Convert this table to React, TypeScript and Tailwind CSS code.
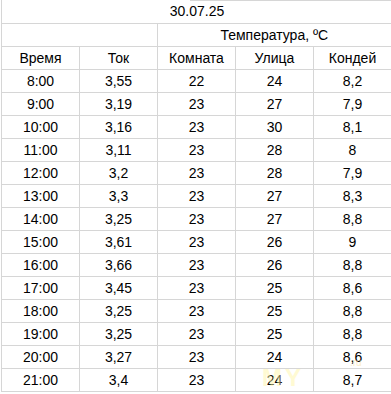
import React from "react";

const rows: string[][] = [
  ["8:00", "3,55", "22", "24", "8,2"],
  ["9:00", "3,19", "23", "27", "7,9"],
  ["10:00", "3,16", "23", "30", "8,1"],
  ["11:00", "3,11", "23", "28", "8"],
  ["12:00", "3,2", "23", "28", "7,9"],
  ["13:00", "3,3", "23", "27", "8,3"],
  ["14:00", "3,25", "23", "27", "8,8"],
  ["15:00", "3,61", "23", "26", "9"],
  ["16:00", "3,66", "23", "26", "8,8"],
  ["17:00", "3,45", "23", "25", "8,6"],
  ["18:00", "3,25", "23", "25", "8,8"],
  ["19:00", "3,25", "23", "25", "8,8"],
  ["20:00", "3,27", "23", "24", "8,6"],
  ["21:00", "3,4", "23", "24", "8,7"],
];

const header = ["Время", "Ток", "Комната", "Улица", "Кондей"];

export default function App() {
  return (
    <div
      className="relative w-[391px] h-[394px] overflow-hidden bg-white text-[14px] text-black"
      style={{ fontFamily: '"Liberation Sans", Arial, sans-serif' }}
    >
      <div className="ml-px w-[390px] border-l border-[#d6d6d6]">
        <div className="relative h-[24px] border-b border-[#d6d6d6] flex items-center justify-center pl-[1px]">
          <div className="absolute top-0 right-0 w-[201px] h-px bg-[#d6d6d6]" />
          30.07.25
        </div>
        <div className="flex h-[23px] border-b border-[#d6d6d6]">
          <div className="w-[156px] border-r border-[#d6d6d6]" />
          <div className="w-[234px] flex items-center justify-center">Температура, ºC</div>
        </div>
        <div className="grid grid-cols-[78px_78px_78px_78px_78px]">
          {[header, ...rows].map((r, i) =>
            r.map((c, j) => (
              <div
                key={`${i}-${j}`}
                className="h-[23px] border-r border-b border-[#d6d6d6] flex items-center justify-center"
              >
                {c}
              </div>
            ))
          )}
        </div>
      </div>
      <div
        aria-hidden="true"
        className="pointer-events-none absolute left-[262px] top-[366px] text-[24px] font-bold text-[#fff7a8] opacity-50 leading-none tracking-[3px]"
      >
        MY
      </div>
      <div
        aria-hidden="true"
        className="pointer-events-none absolute left-[350px] top-[358px] text-[10px] text-[#fbe3a6] opacity-60 leading-none"
      >
        .ru
      </div>
    </div>
  );
}
